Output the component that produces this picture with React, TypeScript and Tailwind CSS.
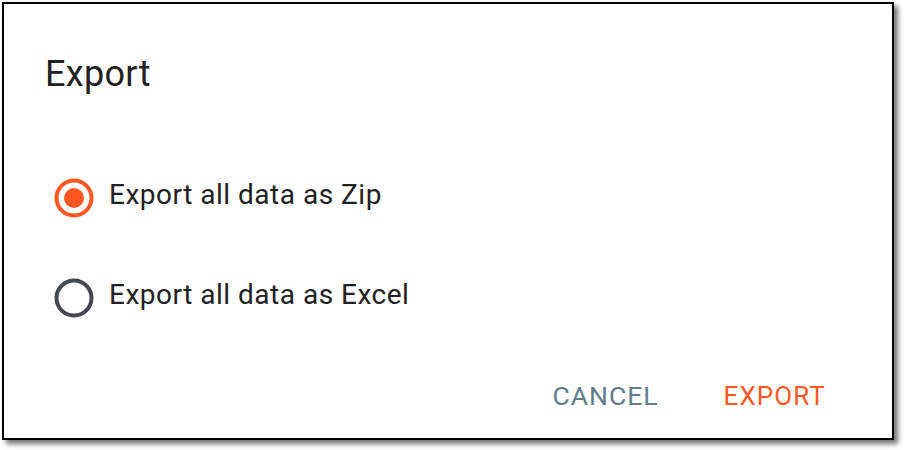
import { useState } from "react";

//選項資料
const options = [
  { id: "zip", label: "Export all data as Zip" },
  { id: "excel", label: "Export all data as Excel" },
];

const RadioIcon = ({ checked }: { checked: boolean }) => (
  <svg width="40" height="40" viewBox="0 0 40 40" className="mt-[3px] shrink-0">
    <circle
      cx="20"
      cy="20"
      r="17.5"
      fill="none"
      stroke={checked ? "#ff5722" : "#45494e"}
      strokeWidth="4"
    />
    {checked && <circle cx="20" cy="20" r="10" fill="#ff5722" />}
  </svg>
);

const App = () => {
  const [selected, setSelected] = useState("zip");

  return (
    <div className="w-[904px] h-[450px] bg-white font-['Roboto',sans-serif]">
      <div className="m-[2px] w-[892px] h-[438px] border-2 border-black bg-white shadow-[4px_4px_5px_rgba(0,0,0,0.55)] flex flex-col">
        {/* title */}
        <h2 className="pt-[46px] pl-[41px] text-[36px] leading-[48px] font-normal tracking-[0.3px] text-[#212121]">
          Export
        </h2>

        {/* radio group */}
        <div className="mt-[77px] pl-[50px] flex flex-col gap-[57px]">
          {options.map((item) => (
            <label
              key={item.id}
              className="flex items-start gap-[15px] cursor-pointer"
              onClick={() => setSelected(item.id)}
            >
              <RadioIcon checked={selected === item.id} />
              <span className="text-[28px] leading-[40px] tracking-[0.5px] text-[#212121]">
                {item.label}
              </span>
            </label>
          ))}
        </div>

        {/* actions */}
        <div className="mt-[60px] flex justify-end gap-[65px] pr-[66px]">
          <button className="text-[26.5px] leading-[36px] font-normal tracking-[1px] uppercase text-[#607d8b]">
            Cancel
          </button>
          <button className="text-[26px] leading-[36px] font-normal tracking-[1.1px] uppercase text-[#ff5722]">
            Export
          </button>
        </div>
      </div>
    </div>
  );
};

export default App;
